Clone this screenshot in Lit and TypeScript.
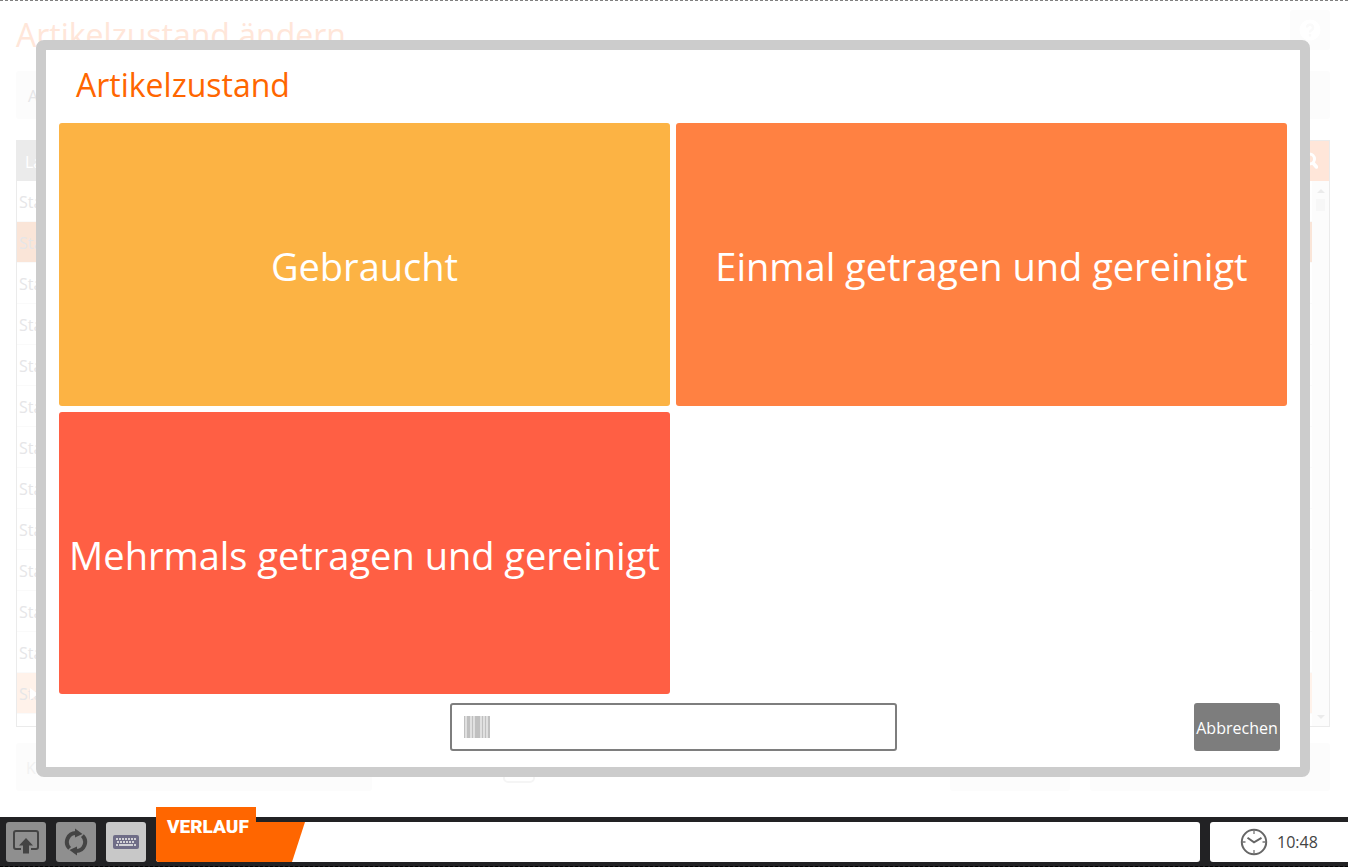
import { LitElement, html, css, svg } from "lit";
import { customElement, state } from "lit/decorators.js";

interface Condition {
  label: string;
  tone: string;
}

const CONDITIONS: Condition[] = [
  { label: "Gebraucht", tone: "amber" },
  { label: "Einmal getragen und gereinigt", tone: "orange" },
  { label: "Mehrmals getragen und gereinigt", tone: "red" },
];

const ROWS = Array.from({ length: 13 }, (_, i) => ({
  name: "Stand",
  mark: i === 1 ? "selected" : i === 12 ? "current" : "",
}));

const uploadIcon = svg`<svg width="26" height="24" viewBox="0 0 26 24" aria-hidden="true">
  <path d="M8 19H3a2 2 0 0 1-2-2V3a2 2 0 0 1 2-2h20a2 2 0 0 1 2 2v14a2 2 0 0 1-2 2h-5" fill="none" stroke="#444" stroke-width="2"/>
  <path d="M13 8l7 7.500h-4v8h-6v-8H6z" fill="#444"/></svg>`;

const refreshIcon = svg`<svg width="24" height="28" viewBox="0 0 24 28" aria-hidden="true">
  <g fill="none" stroke="#444" stroke-width="4">
    <path d="M12 5A9 9 0 0 0 5.600 20.400"/>
    <path d="M12 23A9 9 0 0 0 18.400 7.600"/></g>
  <path d="M11 0.500V9.500L18.500 6z" fill="#444"/><path d="M13 27.500V18.500L5.500 22z" fill="#444"/></svg>`;

const keyboardIcon = svg`<svg width="26" height="14" viewBox="0 0 26 14" aria-hidden="true">
  <rect width="26" height="14" rx="2" fill="#6f6d87"/>
  <g stroke="#d2d2d6" stroke-width="2">
    <path d="M3 4h20" stroke-dasharray="2 1"/>
    <path d="M4 7h17" stroke-dasharray="2 1"/>
    <path d="M3 10h2M6 10h14M21 10h2"/></g></svg>`;

const clockIcon = svg`<svg width="28" height="28" viewBox="0 0 28 28" aria-hidden="true">
  <circle cx="14" cy="14" r="12.2" fill="none" stroke="#666" stroke-width="2"/>
  <path d="M14 2v4M14 22v4M2 14h3.500M22.500 14h3.500" stroke="#777" stroke-width="1.300"/>
  <path d="M7.500 9.800L14 14.300L21.500 9.800" fill="none" stroke="#666" stroke-width="2"/></svg>`;

const barcodeIcon = svg`<svg width="26" height="22" viewBox="0 0 26 22" shape-rendering="crispEdges" aria-hidden="true">
  <rect width="26" height="22" fill="#e0e0e0"/>
  <path d="M0 0h1v22H0zM3 0h3v22H3zM8 0h1v22H8zM11 0h5v22h-5zM18 0h1v22h-1zM21 0h1v22h-1zM24 0h2v22h-2z" fill="#c0c0c0"/></svg>`;

const helpIcon = svg`<svg width="22" height="22" viewBox="0 0 22 22" aria-hidden="true">
  <circle cx="11" cy="11" r="10.500" fill="#fff"/>
  <path d="M8 8.500a3 3 0 1 1 4.500 2.600c-1.200.700-1.500 1-1.500 2.400M11 15v2.500" fill="none" stroke="#fafafa" stroke-width="2.500"/></svg>`;

const searchIcon = svg`<svg width="18" height="18" viewBox="0 0 18 18" aria-hidden="true">
  <circle cx="9.500" cy="7" r="5" fill="none" stroke="#fff" stroke-width="3"/>
  <path d="M13 11l3.500 4" stroke="#fff" stroke-width="3.500" stroke-linecap="round"/></svg>`;

@customElement("app-root")
export class AppRoot extends LitElement {
  @state() private code = "";

  static styles = css`
    :host {
      display: flex;
      flex-direction: column;
      position: relative;
      height: 100vh;
      box-sizing: border-box;
      background: #fff;
      color: #444;
      font: 16px/24px "Segoe UI", "Open Sans", "Noto Sans", sans-serif;
    }
    * { box-sizing: border-box; }
    button, input { font: inherit; margin: 0; }
    button { border: 0; padding: 0; cursor: pointer; }
    svg { display: block; flex: none; }
    h1, h2 { margin: 0; font-weight: 400; font-size: 32px; line-height: 48px; }

    .page {
      flex: 1;
      min-height: 0;
      display: flex;
      flex-direction: column;
      padding: 9px 18px 26px 16px;
      border-top: 1px dashed #808080;
      color: #e6e6e8;
    }
    .head { display: flex; justify-content: space-between; height: 40px; margin-bottom: 21px; }
    .head h1 { color: #ffe6d9; line-height: 50px; white-space: nowrap; }
    .help { width: 40px; height: 40px; border-radius: 3px; background: #fcfcfc; display: grid; place-items: center; }
    .band { height: 48px; border-radius: 3px; background: #fcfcfc; padding: 13px 12px; line-height: 24px; }
    .list { flex: 1; min-height: 0; display: flex; flex-direction: column; margin: 21px 0 16px; border: 1px solid #ebebeb; overflow: hidden; }
    .bar { flex: none; display: flex; height: 40px; background: #ebebeb; color: #fff; }
    .bar span { flex: 1; padding: 9px 8px; }
    .search { width: 40px; background: #ffe6d9; display: grid; place-items: center; }
    .body { flex: 1; min-height: 0; display: flex; }
    table { flex: 1; border-collapse: separate; border-spacing: 0; align-self: flex-start; }
    td { height: 41px; padding: 2px 2px 0; border-bottom: 1px solid #fafafa; }
    .selected td { background: #fae5d8; }
    .current td { background: #fff2ea; }
    .play { display: inline-block; border: solid transparent; border-width: 6px 0 6px 8px; border-left-color: #fff; }
    .cell { display: flex; align-items: center; }
    .cell .play { margin-left: -32px; }
    .scroll { width: 17px; display: flex; flex-direction: column; align-items: center; padding: 8px 0 7px; background: #fcfcfc; }
    .up, .down { border: 4px solid transparent; }
    .up { border-top: 0; border-bottom-color: #ebebeb; }
    .down { border-bottom: 0; border-top-color: #ebebeb; margin-top: auto; }
    .thumb { width: 9px; height: 12px; margin-top: 6px; background: #f7f7f7; }
    .options { display: flex; align-items: flex-start; }
    .options .first { width: 356px; color: #f2f2f2; padding-left: 10px; }
    .tick { appearance: none; width: 32px; height: 32px; margin: 8px auto 0 131px; border: 2px solid #f5f5f5; border-radius: 5px; }
    .options .mid { width: 120px; margin-right: 20px; }
    .options .last { width: 240px; }

    .modal {
      position: absolute;
      inset: 40px 38px 90px 36px;
      display: flex;
      flex-direction: column;
      padding: 0 13px 16px;
      border: 10px solid #ccc;
      border-radius: 8px;
      background: #fff;
      background-clip: padding-box;
    }
    .modal h2 { color: #f60; padding: 11px 17px 14px; }
    .tiles { flex: 1; min-height: 0; display: grid; grid-template-columns: 1fr 1fr; grid-template-rows: 1fr 1fr; gap: 6px; }
    .tile { border-radius: 3px; padding-top: 4px; color: #fff; font-size: 38px; line-height: 52px; white-space: nowrap; }
    .amber { background: #fcb344; }
    .orange { background: #ff8142; }
    .red { background: #ff5f44; }
    .foot { display: grid; grid-template-columns: 1fr minmax(0, 447px) 1fr; margin-top: 9px; padding: 0 7px; height: 48px; }
    .scan { grid-column: 2; display: flex; align-items: center; gap: 8px; padding: 0 12px; border: 2px solid #7e7e7e; border-radius: 3px; }
    .scan input { flex: 1; min-width: 0; border: 0; outline: 0; background: none; color: #444; }
    .cancel { justify-self: end; width: 86px; padding-top: 2px; border-radius: 3px; background: #7d7d7d; color: #fff; }

    .dock { flex: none; display: flex; height: 50px; padding: 5px 0 4px 6px; background: #222224; border-bottom: 1px dashed #000; }
    .tool { width: 40px; height: 40px; margin-right: 10px; border-radius: 3px; background: #8f8f8f; display: grid; place-items: center; }
    .tool.light { background: #c8c8c8; }
    .history { flex: 1; height: 40px; display: flex; align-items: flex-end; border-radius: 3px; background: #fff; }
    .tab { width: 100px; height: 55px; padding: 0 0 15px 11px; background: #f60; color: #fff; border-bottom-left-radius: 3px; font: 900 19px/30px Impact, Roboto, sans-serif; text-align: left; white-space: nowrap; }
    .slant { width: 49px; height: 40px; background: #f60; clip-path: polygon(0 0, 100% 0, 36px 100%, 0 100%); }
    .time { flex: none; width: 138px; height: 40px; margin-left: 10px; display: flex; align-items: center; gap: 9px; padding-left: 30px; border-radius: 3px 0 0 3px; background: #fff; }
  `;

  render() {
    return html`
      <main class="page">
        <div class="head">
          <h1>Artikelzustand ändern</h1>
          <button class="help" aria-label="Hilfe">${helpIcon}</button>
        </div>
        <div class="band">Artikel</div>
        <div class="list">
          <div class="bar">
            <span>Lager</span>
            <button class="search" aria-label="Suchen">${searchIcon}</button>
          </div>
          <div class="body">
            <table>
              <tbody>
                ${ROWS.map(
                  (row) => html`<tr class=${row.mark}>
                    <td><div class="cell">${row.name}${row.mark === "current" ? html`<span class="play"></span>` : ""}</div></td>
                  </tr>`
                )}
              </tbody>
            </table>
            <div class="scroll"><i class="up"></i><i class="thumb"></i><i class="down"></i></div>
          </div>
        </div>
        <div class="options">
          <div class="band first">Kunde</div>
          <input class="tick" type="checkbox" aria-label="Auswahl" />
          <div class="band mid"></div>
          <div class="band last"></div>
        </div>
      </main>

      <section class="modal" role="dialog" aria-labelledby="title">
        <h2 id="title">Artikelzustand</h2>
        <div class="tiles">
          ${CONDITIONS.map((c) => html`<button class="tile ${c.tone}">${c.label}</button>`)}
        </div>
        <div class="foot">
          <label class="scan">
            ${barcodeIcon}
            <input
              type="text"
              aria-label="Barcode"
              .value=${this.code}
              @input=${(e: Event) => (this.code = (e.target as HTMLInputElement).value)}
            />
          </label>
          <button class="cancel">Abbrechen</button>
        </div>
      </section>

      <footer class="dock">
        <button class="tool" aria-label="Hochladen">${uploadIcon}</button>
        <button class="tool" aria-label="Aktualisieren">${refreshIcon}</button>
        <button class="tool light" aria-label="Tastatur">${keyboardIcon}</button>
        <div class="history">
          <button class="tab">VERLAUF</button>
          <span class="slant"></span>
        </div>
        <div class="time">${clockIcon}<time>10:48</time></div>
      </footer>
    `;
  }
}
